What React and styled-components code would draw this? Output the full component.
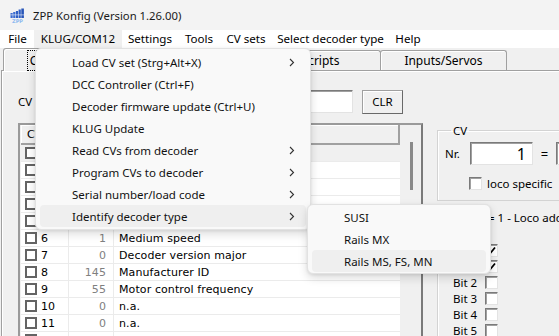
import styled, { createGlobalStyle } from 'styled-components';

const GlobalStyle = createGlobalStyle`
  html, body {
    margin: 0;
    padding: 0;
    background: #f0f0f0;
  }
  body {
    font-family: "Noto Sans", "Open Sans", sans-serif;
    font-size: 11px;
    color: #000;
  }
  * {
    box-sizing: border-box;
  }
`;

const Window = styled.div`
  position: relative;
  width: 559px;
  height: 336px;
  overflow: hidden;
  background: #f0f0f0;
  display: flex;
  flex-direction: column;
`;

const TitleBar = styled.div`
  height: 30px;
  flex: none;
  display: flex;
  align-items: center;
  gap: 8px;
  padding-left: 10px;
  background: #f3f3f3;
  color: #1a1a1a;
  font-size: 11.3px;
`;

const MenuBar = styled.div`
  height: 18px;
  flex: none;
  display: flex;
  padding-left: 1px;
  background: #fff;
  font-size: 11.6px;
`;

const MenuBarItem = styled.div`
  width: ${({ w }) => w}px;
  flex: none;
  text-align: center;
  line-height: 18px;
  white-space: nowrap;
  background: ${({ open }) => (open ? '#f0f0f0' : 'transparent')};
`;

const Client = styled.div`
  flex: 1;
  min-height: 0;
  display: flex;
  flex-direction: column;
`;

const TabStrip = styled.div`
  height: 22px;
  flex: none;
  display: flex;
  align-items: flex-end;
  padding-left: 3px;
  font-size: 12px;
`;

const Tab = styled.div`
  position: relative;
  z-index: ${({ selected }) => (selected ? 1 : 0)};
  width: ${({ w }) => w}px;
  height: ${({ selected }) => (selected ? 23 : 20)}px;
  margin-left: -1px;
  margin-bottom: ${({ selected }) => (selected ? -1 : 0)}px;
  border: 1px solid #a0a0a0;
  border-bottom: none;
  border-radius: 3px 3px 0 0;
  background: #f0f0f0;
  box-shadow: inset 1px 1px 0 #fff;
  display: flex;
  align-items: center;
  justify-content: center;
  white-space: nowrap;
  &:first-child {
    margin-left: 0;
  }
`;

const FocusLabel = styled.span`
  outline: 1px dotted #000;
  outline-offset: 1px;
  padding: 0 1px;
`;

const TabPage = styled.div`
  flex: 1;
  min-height: 0;
  margin-left: 1px;
  border-top: 1px solid #a0a0a0;
  border-left: 1px solid #a0a0a0;
  box-shadow: inset 1px 1px 0 #fff;
  padding-left: 16px;
  display: flex;
  flex-direction: column;
`;

const TopRow = styled.div`
  margin-top: 19px;
  height: 23px;
  display: flex;
  align-items: center;
`;

const FieldLabel = styled.div`
  width: ${({ w }) => w}px;
  flex: none;
  font-size: 11.5px;
`;

const TextField = styled.div`
  width: ${({ w }) => w}px;
  height: 23px;
  flex: none;
  background: #fff;
  border: 1px solid;
  border-color: #7a7a7a #e3e3e3 #e3e3e3 #7a7a7a;
  box-shadow: inset 1px 1px 0 #a0a0a0;
  display: flex;
  align-items: center;
  justify-content: flex-end;
  padding-right: 6px;
  font-size: 16px;
`;

const Button = styled.div`
  width: 41px;
  height: 24px;
  margin-left: 9px;
  border: 1px solid;
  border-color: #a0a0a0 #696969 #696969 #a0a0a0;
  background: #f0f0f0;
  box-shadow: inset 1px 1px 0 #fff;
  display: flex;
  align-items: center;
  justify-content: center;
  font-size: 11.5px;
`;

const Body = styled.div`
  flex: 1;
  min-height: 0;
  margin-top: 10px;
  display: flex;
  gap: 14px;
`;

const TableBox = styled.div`
  width: 405px;
  flex: none;
  display: flex;
  border: 2px solid;
  border-color: #9a9a9a #7a7a7a #7a7a7a #9a9a9a;
  border-bottom: none;
  padding-left: 1px;
  background: #f0f0f0;
`;

const DataArea = styled.div`
  width: 379px;
  display: flex;
  flex-direction: column;
  font-family: "DejaVu Sans", sans-serif;
  font-size: 11px;
  letter-spacing: 0.1px;
`;

const HeaderRow = styled.div`
  height: 20px;
  flex: none;
  display: grid;
  grid-template-columns: 47px 45px 1fr;
  align-items: center;
  background: #f0f0f0;
  border-right: 2px solid #a0a0a0;
  border-bottom: 2px solid #a0a0a0;
  box-shadow: inset 1px 1px 0 #fff;
  span {
    padding-left: 6px;
  }
`;

const Row = styled.div`
  height: 17px;
  flex: none;
  display: grid;
  grid-template-columns: 47px 45px 1fr;
  background: ${({ selected }) => (selected ? '#f0f0f0' : '#fff')};
  border-bottom: 1px solid #ebebeb;
`;

const Cell = styled.div`
  display: flex;
  align-items: center;
  gap: 4px;
  padding: ${({ pad }) => pad || '0'};
  justify-content: ${({ right }) => (right ? 'flex-end' : 'flex-start')};
  color: ${({ muted }) => (muted ? '#808080' : '#000')};
  border-left: ${({ line }) => (line ? '1px solid #ebebeb' : 'none')};
  white-space: nowrap;
`;

const GridBox = styled.div`
  width: 12px;
  height: 12px;
  flex: none;
  border: 2px solid #646464;
  background: #fff;
`;

const ScrollTrack = styled.div`
  flex: 1;
  padding: 17px 0 0 10px;
`;

const Thumb = styled.div`
  width: 3px;
  height: 48px;
  background: #8a8a8a;
`;

const RightPanel = styled.div`
  flex: 1;
  display: flex;
  flex-direction: column;
  font-size: 11.5px;
`;

const GroupBox = styled.fieldset`
  margin: 0;
  width: 200px;
  padding: 4px 0 10px 7px;
  border: 1px solid #d3d3d3;
  box-shadow: inset 1px 1px 0 #fff;
`;

const Legend = styled.legend`
  margin-left: 6px;
  padding: 0 2px;
  line-height: 15px;
`;

const InlineRow = styled.div`
  display: flex;
  align-items: center;
  height: ${({ h }) => h}px;
  margin-top: ${({ mt }) => mt || 0}px;
  padding-left: ${({ pl }) => pl || 0}px;
`;

const Equals = styled.div`
  width: 23px;
  flex: none;
  text-align: center;
  font-size: 13px;
`;

const ClassicCheck = styled.div`
  width: 13px;
  height: 13px;
  flex: none;
  border: 1px solid;
  border-color: #7a7a7a #e3e3e3 #e3e3e3 #7a7a7a;
  box-shadow: inset 1px 1px 0 #a0a0a0;
  background: #fff;
  margin-right: ${({ mr }) => mr || 0}px;
  display: flex;
  align-items: center;
  justify-content: center;
`;

const ValueBox = styled.div`
  flex: 1;
  margin-top: 3px;
  border-left: 1px solid #d3d3d3;
  box-shadow: inset 1px 0 0 #fff;
  display: flex;
  flex-direction: column;
`;

const Description = styled.div`
  margin-top: 6px;
  height: 16px;
  line-height: 16px;
  padding-left: 50px;
  white-space: nowrap;
`;

const BitList = styled.div`
  margin-top: 16px;
  display: flex;
  flex-direction: column;
`;

const BitRow = styled.div`
  height: 16px;
  display: flex;
  align-items: center;
  padding-left: 15px;
`;

const BitLabel = styled.div`
  width: 32px;
`;

const Menu = styled.div`
  position: absolute;
  left: ${({ x }) => x}px;
  top: ${({ y }) => y}px;
  width: ${({ w }) => w}px;
  padding: ${({ pad }) => pad}px 0;
  background: #f9f9f9;
  border: 1px solid #e2e2e2;
  border-radius: 6px;
  box-shadow: 0 4px 10px rgba(0, 0, 0, 0.14), 0 1px 3px rgba(0, 0, 0, 0.08);
  z-index: ${({ z }) => z};
`;

const MenuEntry = styled.div`
  height: 22px;
  margin: 0 4px;
  padding: 0 11px 0 32px;
  border-radius: 4px;
  display: flex;
  align-items: center;
  justify-content: space-between;
  white-space: nowrap;
  color: #111;
  font-size: 11.5px;
  background: ${({ active }) => (active ? '#efefef' : 'transparent')};
`;

const AppIcon = () => (
  <svg width="15" height="15" viewBox="0 0 15 15">
    <rect x="0.5" y="5" width="2.2" height="5" fill="#3a6cd0" />
    <rect x="3.2" y="4" width="2.2" height="6" fill="#3a6cd0" />
    <rect x="5.9" y="3" width="2.2" height="7" fill="#2f5fc4" />
    <rect x="8.6" y="1.5" width="2.2" height="8.5" fill="#2f5fc4" />
    <rect x="11.3" y="0.5" width="2.6" height="9.5" fill="#2856b8" />
    <rect x="0.5" y="6.5" width="13.5" height="0.8" fill="#fff" opacity="0.7" />
    <text
      x="7.5"
      y="14.6"
      fontSize="5"
      fontWeight="bold"
      fill="#8fbaf0"
      textAnchor="middle"
      fontFamily="DejaVu Sans, sans-serif"
    >
      ZPP
    </text>
  </svg>
);

const Chevron = () => (
  <svg width="6" height="9" viewBox="0 0 6 9">
    <path d="M1 1 L4.5 4.5 L1 8" fill="none" stroke="#333" strokeWidth="1.1" />
  </svg>
);

const Tick = () => (
  <svg width="9" height="9" viewBox="0 0 9 9">
    <path d="M1 4.5 L3.5 7 L8 1.5" fill="none" stroke="#000" strokeWidth="1.8" />
  </svg>
);

const menuNames = [
  { name: 'File', w: 33 },
  { name: 'KLUG/COM12', w: 88, open: true },
  { name: 'Settings', w: 56 },
  { name: 'Tools', w: 42 },
  { name: 'CV sets', w: 52 },
  { name: 'Select decoder type', w: 117 },
  { name: 'Help', w: 38 },
];

const tabs = [
  { label: 'CVs', w: 74, selected: true },
  { label: 'Function mapping', w: 102 },
  { label: 'Sound', w: 84 },
  { label: 'Scripts', w: 121 },
  { label: 'Inputs/Servos', w: 127 },
];

const klugItems = [
  { label: 'Load CV set (Strg+Alt+X)', sub: true },
  { label: 'DCC Controller (Ctrl+F)' },
  { label: 'Decoder firmware update (Ctrl+U)' },
  { label: 'KLUG Update' },
  { label: 'Read CVs from decoder', sub: true },
  { label: 'Program CVs to decoder', sub: true },
  { label: 'Serial number/load code', sub: true },
  { label: 'Identify decoder type', sub: true, active: true },
];

const decoderTypes = [
  { label: 'SUSI' },
  { label: 'Rails MX' },
  { label: 'Rails MS, FS, MN', active: true },
];

const cvRows = [
  [1, 3, 'Loco address'],
  [2, 1, 'Start voltage'],
  [3, 2, 'Acceleration rate'],
  [4, 2, 'Deceleration rate'],
  [5, 255, 'Maximum speed'],
  [6, 1, 'Medium speed'],
  [7, 0, 'Decoder version major'],
  [8, 145, 'Manufacturer ID'],
  [9, 55, 'Motor control frequency'],
  [10, 0, 'n.a.'],
  [11, 0, 'n.a.'],
  [12, 0, 'n.a.'],
];

const bits = [
  { n: 0, on: true },
  { n: 1, on: true },
  { n: 2 },
  { n: 3 },
  { n: 4 },
  { n: 5 },
];

export default function App() {
  return (
    <>
      <GlobalStyle />
      <Window>
        <TitleBar>
          <AppIcon />
          <span>ZPP Konfig (Version 1.26.00)</span>
        </TitleBar>

        <MenuBar>
          {menuNames.map((m) => (
            <MenuBarItem key={m.name} w={m.w} open={m.open}>
              {m.name}
            </MenuBarItem>
          ))}
        </MenuBar>

        <Client>
          <TabStrip>
            {tabs.map((t) => (
              <Tab key={t.label} w={t.w} selected={t.selected}>
                {t.selected ? <FocusLabel>{t.label}</FocusLabel> : t.label}
              </Tab>
            ))}
          </TabStrip>

          <TabPage>
            <TopRow>
              <FieldLabel w={24}>CV</FieldLabel>
              <TextField w={311} />
              <Button>CLR</Button>
            </TopRow>

            <Body>
              <TableBox>
                <DataArea>
                  <HeaderRow>
                    <span>CV</span>
                    <span>Value</span>
                    <span>Name</span>
                  </HeaderRow>
                  {cvRows.map(([cv, value, name]) => (
                    <Row key={cv} selected={cv === 1}>
                      <Cell pad="0 0 0 4px">
                        <GridBox />
                        {cv}
                      </Cell>
                      <Cell line right muted pad="0 7px 0 0">
                        {value}
                      </Cell>
                      <Cell line pad="0 0 0 5px">
                        {name}
                      </Cell>
                    </Row>
                  ))}
                </DataArea>
                <ScrollTrack>
                  <Thumb />
                </ScrollTrack>
              </TableBox>

              <RightPanel>
                <GroupBox>
                  <Legend>CV</Legend>
                  <InlineRow h={23}>
                    <FieldLabel w={25}>Nr.</FieldLabel>
                    <TextField w={63}>1</TextField>
                    <Equals>=</Equals>
                    <TextField w={60} />
                  </InlineRow>
                  <InlineRow h={13} mt={12} pl={24}>
                    <ClassicCheck mr={5} />
                    loco specific
                  </InlineRow>
                </GroupBox>

                <ValueBox>
                  <Description>= 1 - Loco address</Description>
                  <BitList>
                    {bits.map((b) => (
                      <BitRow key={b.n}>
                        <BitLabel>Bit {b.n}</BitLabel>
                        <ClassicCheck>{b.on && <Tick />}</ClassicCheck>
                      </BitRow>
                    ))}
                  </BitList>
                </ValueBox>
              </RightPanel>
            </Body>
          </TabPage>
        </Client>

        <Menu x={35} y={48} w={276} pad={2} z={5}>
          {klugItems.map((item) => (
            <MenuEntry key={item.label} active={item.active}>
              <span>{item.label}</span>
              {item.sub && <Chevron />}
            </MenuEntry>
          ))}
        </Menu>

        <Menu x={307} y={204} w={184} pad={1} z={6}>
          {decoderTypes.map((item) => (
            <MenuEntry key={item.label} active={item.active}>
              <span>{item.label}</span>
            </MenuEntry>
          ))}
        </Menu>
      </Window>
    </>
  );
}
